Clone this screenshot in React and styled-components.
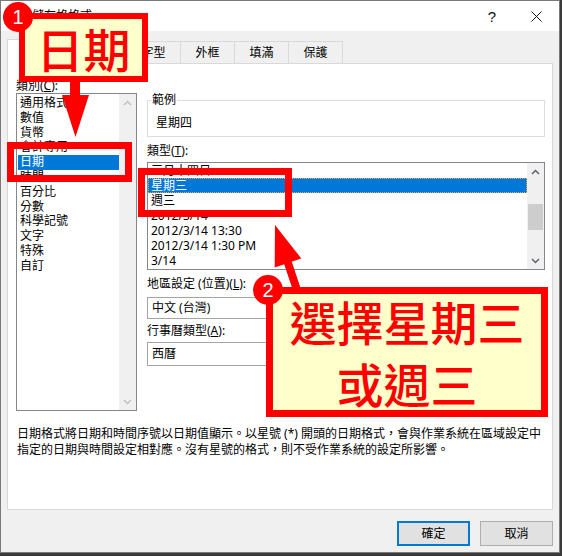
import React from "react";
import styled, { createGlobalStyle } from "styled-components";

const UI_FONT = `"Noto Sans", "Noto Sans CJK TC", sans-serif`;
const CJK_FONT = `"Noto Sans CJK TC", "Noto Sans", sans-serif`;
const RED = "#ff0000";

const GlobalStyle = createGlobalStyle`
  html, body {
    margin: 0;
    padding: 0;
    background: #3a3a3a;
  }
  body {
    width: 562px;
    height: 556px;
    overflow: hidden;
    font-family: ${UI_FONT};
  }
`;

const Screen = styled.div`
  position: relative;
  width: 562px;
  height: 556px;
`;

const Dialog = styled.div`
  width: 560px;
  height: 553px;
  box-sizing: border-box;
  border: 1px solid #7a7a7a;
  background: #f0f0f0;
  display: flex;
  flex-direction: column;
  font-size: 12px;
  color: #000;
  isolation: isolate;
`;

/* ---------- caption ---------- */
const TitleBar = styled.div`
  height: 30px;
  background: #fff;
  display: flex;
  align-items: center;
`;

const Title = styled.div`
  flex: 1;
  padding-left: 31px;
  font-size: 12px;
  line-height: 16px;
`;

const CaptionButton = styled.div`
  width: 46px;
  height: 30px;
  display: flex;
  align-items: center;
  justify-content: center;
  padding-left: ${(p) => p.$nudge || 0}px;
  box-sizing: border-box;
  font-size: 15px;
  color: #111;
  font-family: "Liberation Sans", sans-serif;
`;

/* ---------- body ---------- */
const Body = styled.div`
  flex: 1;
  display: flex;
  flex-direction: column;
  padding: 8px 6px 6px 6px;
`;

const TabStrip = styled.div`
  height: 24px;
  display: flex;
  align-items: flex-end;
`;

const Tab = styled.div`
  box-sizing: border-box;
  width: ${(p) => p.$width}px;
  height: ${(p) => (p.$active ? 25 : 22)}px;
  margin-bottom: ${(p) => (p.$active ? -1 : 0)}px;
  position: relative;
  z-index: ${(p) => (p.$active ? 1 : 0)};
  background: ${(p) => (p.$active ? "#fff" : "#f0f0f0")};
  border-top: 1px solid #d9d9d9;
  border-left: 1px solid #d9d9d9;
  border-right: ${(p) => (p.$active || p.$last ? "1px solid #d9d9d9" : "none")};
  display: flex;
  align-items: center;
  justify-content: center;
  line-height: 16px;
`;

const Panel = styled.div`
  height: 447px;
  box-sizing: border-box;
  background: #fff;
  border: 1px solid #d9d9d9;
  display: flex;
  flex-direction: column;
  padding: 14px 7px 0 8px;
`;

const PanelGrid = styled.div`
  display: grid;
  grid-template-columns: 121px 398px;
  column-gap: 10px;
  align-items: start;
`;

const Column = styled.div`
  display: flex;
  flex-direction: column;
  padding-top: ${(p) => p.$pad || 0}px;
`;

const FieldLabel = styled.div`
  line-height: 15px;
  height: 15px;
  margin-top: ${(p) => p.$gap || 0}px;
  white-space: nowrap;
  u {
    text-decoration-thickness: 1px;
    text-underline-offset: 1px;
  }
`;

const ListBox = styled.div`
  box-sizing: border-box;
  height: ${(p) => p.$height}px;
  margin-top: ${(p) => p.$gap || 0}px;
  border: 1px solid #828790;
  background: #fff;
  display: flex;
  overflow: hidden;
`;

const ListRows = styled.div`
  flex: 1;
  min-width: 0;
  padding: ${(p) => p.$pad || "0"};
`;

const ListRow = styled.div`
  box-sizing: border-box;
  height: ${(p) => p.$rowHeight}px;
  line-height: ${(p) => p.$rowHeight}px;
  padding-left: ${(p) => p.$indent}px;
  white-space: nowrap;
  background: ${(p) => (p.$selected ? "#0078d7" : "transparent")};
  color: ${(p) => (p.$selected ? "#fff" : "#000")};
  outline: ${(p) => (p.$focused ? "1px dotted #f3a649" : "none")};
  outline-offset: -1px;
`;

const ScrollBar = styled.div`
  width: 17px;
  background: #f0f0f0;
  display: flex;
  flex-direction: column;
`;

const ScrollButton = styled.div`
  height: 17px;
  display: flex;
  align-items: center;
  justify-content: center;
`;

const ScrollTrack = styled.div`
  flex: 1;
  padding-top: ${(p) => p.$offset}px;
`;

const ScrollThumb = styled.div`
  height: ${(p) => p.$size}px;
  margin: 0 1px;
  background: #cdcdcd;
`;

const Sample = styled.fieldset`
  margin: 0;
  min-width: 0;
  padding: 8px 8px 5px;
  border: 1px solid #dcdcdc;
`;

const SampleLegend = styled.legend`
  margin-left: -5px;
  padding: 0 1px;
  line-height: 14px;
`;

const SampleValue = styled.div`
  line-height: 16px;
`;

const Combo = styled.div`
  box-sizing: border-box;
  height: ${(p) => p.$height}px;
  margin-top: ${(p) => p.$gap || 0}px;
  border: 1px solid #a5a5a5;
  background: #fff;
  display: flex;
  align-items: center;
  justify-content: space-between;
  padding: 0 6px 0 4px;
  line-height: 16px;
`;

const Description = styled.p`
  margin: 15px 0 0 1px;
  line-height: 16px;
  white-space: nowrap;
`;

const Footer = styled.div`
  display: flex;
  justify-content: flex-end;
  gap: 10px;
  padding-top: 11px;
`;

const Button = styled.div`
  box-sizing: border-box;
  width: 73px;
  height: 25px;
  background: #e1e1e1;
  border: ${(p) => (p.$default ? "2px solid #0078d7" : "1px solid #adadad")};
  display: flex;
  align-items: center;
  justify-content: center;
  line-height: 16px;
`;

/* ---------- red callouts drawn on top ---------- */
const Overlay = styled.div`
  position: absolute;
  inset: 0;
  z-index: 10;
  pointer-events: none;
`;

const ArrowLayer = styled.svg`
  position: absolute;
  left: 0;
  top: 0;
`;

const Frame = styled.div`
  position: absolute;
  box-sizing: border-box;
  left: ${(p) => p.$x}px;
  top: ${(p) => p.$y}px;
  width: ${(p) => p.$w}px;
  height: ${(p) => p.$h}px;
  border: ${(p) => p.$border}px solid ${RED};
`;

const Callout = styled(Frame)`
  background: #ffffcc;
  display: flex;
  flex-direction: column;
  align-items: center;
  justify-content: center;
  color: ${RED};
  font-family: ${CJK_FONT};
  font-size: 47px;
  font-weight: 500;
  line-height: ${(p) => p.$lineHeight}px;
  white-space: nowrap;
`;

const Badge = styled.div`
  position: absolute;
  left: ${(p) => p.$x}px;
  top: ${(p) => p.$y}px;
  width: 30px;
  height: 30px;
  border-radius: 50%;
  background: ${RED};
  color: #fff;
  display: flex;
  align-items: center;
  justify-content: center;
  font-family: "Liberation Sans", Arial, sans-serif;
  font-size: 20px;
  line-height: 20px;
`;

const Chevron = ({ up, color }) => (
  <svg width="9" height="6" viewBox="0 0 9 6">
    <polyline
      points={up ? "1,5 4.5,1.5 8,5" : "1,1 4.5,4.5 8,1"}
      fill="none"
      stroke={color}
      strokeWidth="1.5"
    />
  </svg>
);

const CloseGlyph = () => (
  <svg width="11" height="11" viewBox="0 0 11 11">
    <path d="M0.5 0.5 L10.5 10.5 M10.5 0.5 L0.5 10.5" stroke="#111" strokeWidth="1" fill="none" />
  </svg>
);

const tabs = [
  { label: "數值", width: 56, active: true },
  { label: "對齊方式", width: 63 },
  { label: "字型", width: 54 },
  { label: "外框", width: 54 },
  { label: "填滿", width: 54 },
  { label: "保護", width: 55, last: true },
];

const categories = [
  "通用格式",
  "數值",
  "貨幣",
  "會計專用",
  "日期",
  "時間",
  "百分比",
  "分數",
  "科學記號",
  "文字",
  "特殊",
  "自訂",
];

const dateTypes = [
  "三月十四日",
  "星期三",
  "週三",
  "2012/3/14",
  "2012/3/14 13:30",
  "2012/3/14 1:30 PM",
  "3/14",
];

export default function App() {
  return (
    <>
      <GlobalStyle />
      <Screen>
        <Dialog>
          <TitleBar>
            <Title>儲存格格式</Title>
            <CaptionButton $nudge={4}>?</CaptionButton>
            <CaptionButton>
              <CloseGlyph />
            </CaptionButton>
          </TitleBar>

          <Body>
            <TabStrip>
              {tabs.map((t) => (
                <Tab key={t.label} $width={t.width} $active={t.active} $last={t.last}>
                  {t.label}
                </Tab>
              ))}
            </TabStrip>

            <Panel>
              <PanelGrid>
                <Column>
                  <FieldLabel>
                    類別(<u>C</u>):
                  </FieldLabel>
                  <ListBox $height={318}>
                    <ListRows $pad="2px 0 0 1px">
                      {categories.map((c, i) => (
                        <ListRow key={c} $rowHeight={14.8} $indent={2} $selected={i === 4}>
                          {c}
                        </ListRow>
                      ))}
                    </ListRows>
                    <ScrollBar>
                      <ScrollButton>
                        <Chevron up color="#c1c1c1" />
                      </ScrollButton>
                      <ScrollTrack $offset={0} />
                      <ScrollButton>
                        <Chevron color="#c1c1c1" />
                      </ScrollButton>
                    </ScrollBar>
                  </ListBox>
                </Column>

                <Column $pad={15}>
                  <Sample>
                    <SampleLegend>範例</SampleLegend>
                    <SampleValue>星期四</SampleValue>
                  </Sample>

                  <FieldLabel $gap={6}>
                    類型(<u>T</u>):
                  </FieldLabel>
                  <ListBox $height={108} $gap={4}>
                    <ListRows>
                      {dateTypes.map((d, i) => (
                        <ListRow
                          key={d}
                          $rowHeight={15}
                          $indent={3}
                          $selected={i === 1}
                          $focused={i === 1}
                        >
                          {d}
                        </ListRow>
                      ))}
                    </ListRows>
                    <ScrollBar>
                      <ScrollButton>
                        <Chevron up color="#606060" />
                      </ScrollButton>
                      <ScrollTrack $offset={24}>
                        <ScrollThumb $size={26} />
                      </ScrollTrack>
                      <ScrollButton>
                        <Chevron color="#606060" />
                      </ScrollButton>
                    </ScrollBar>
                  </ListBox>

                  <FieldLabel $gap={6}>
                    地區設定 (位置)(<u>L</u>):
                  </FieldLabel>
                  <Combo $height={22} $gap={6}>
                    <span>中文 (台灣)</span>
                    <Chevron color="#333" />
                  </Combo>

                  <FieldLabel $gap={4}>
                    行事曆類型(<u>A</u>):
                  </FieldLabel>
                  <Combo $height={24} $gap={4}>
                    <span>西曆</span>
                    <Chevron color="#333" />
                  </Combo>
                </Column>
              </PanelGrid>

              <Description>
                日期格式將日期和時間序號以日期值顯示。以星號 (*) 開頭的日期格式，會與作業系統在區域設定中
                <br />
                指定的日期與時間設定相對應。沒有星號的格式，則不受作業系統的設定所影響。
              </Description>
            </Panel>

            <Footer>
              <Button $default>確定</Button>
              <Button>取消</Button>
            </Footer>
          </Body>
        </Dialog>

        <Overlay>
          <ArrowLayer width="562" height="556" viewBox="0 0 562 556">
            <rect x="70" y="78" width="10" height="19" fill={RED} />
            <polygon points="62,95 89,95 75.5,137" fill={RED} />
            <line x1="299" y1="296" x2="287" y2="260" stroke={RED} strokeWidth="8" />
            <polygon points="275,225 301.3,258.5 274.7,267.5" fill={RED} />
          </ArrowLayer>

          <Frame $x={7} $y={142} $w={125} $h={40} $border={7} />
          <Frame $x={138} $y={168} $w={154} $h={49} $border={7} />

          <Callout $x={19} $y={13} $w={129} $h={69} $border={6} $lineHeight={56}>
            <span>日期</span>
          </Callout>
          <Callout $x={266} $y={287} $w={282} $h={130} $border={7} $lineHeight={62}>
            <span>選擇星期三</span>
            <span>或週三</span>
          </Callout>

          <Badge $x={3} $y={2}>1</Badge>
          <Badge $x={253} $y={275}>2</Badge>
        </Overlay>
      </Screen>
    </>
  );
}
